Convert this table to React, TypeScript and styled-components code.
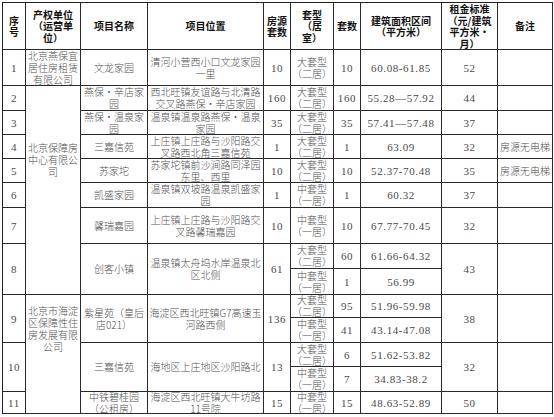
import React from 'react';
import styled, { createGlobalStyle } from 'styled-components';

const Global = createGlobalStyle`
  html, body { margin: 0; padding: 0; background: #fff; }
  body { font-family: "Noto Sans CJK SC", "Noto Sans", sans-serif; }
`;

const Page = styled.div`
  width: 554px;
  height: 417px;
  box-sizing: border-box;
  padding: 2px 0 0 2px;
  overflow: hidden;
`;

const Grid = styled.div`
  display: grid;
  width: max-content;
  grid-template-columns: 23px 55px 67px 116px 27px 43px 27px 81px 56px 55px;
  grid-template-rows: 47px 36px 25px 24px 24px 24px 25px 36px 25px 26px 23px 25px 24px 25px 22px;
  border-top: 1px solid #222;
  border-left: 1px solid #222;
`;

const Cell = styled.div<{ $rs?: number; $pt?: number }>`
  grid-row: span ${p => p.$rs ?? 1};
  box-sizing: border-box;
  min-width: 0;
  border-right: 1px solid #2a2a2a;
  border-bottom: 1px solid #2a2a2a;
  display: flex;
  justify-content: center;
  align-items: ${p => (p.$pt != null ? 'flex-start' : 'center')};
  padding-top: ${p => p.$pt ?? 0}px;
  text-align: center;
  font-size: 10px;
  font-weight: 300;
  line-height: 12px;
  color: #505050;
  white-space: nowrap;
`;

const Head = styled(Cell)`
  font-weight: 700;
  color: #111;
  line-height: 11.5px;
`;

const Num = styled.span`
  font-family: "Liberation Serif", serif;
  font-size: 11px;
  font-weight: 400;
  line-height: 12px;
  letter-spacing: 0.6px;
  color: #4a4a4a;
`;

const L: React.FC<{ t: string[] }> = ({ t }) => (
  <span>
    {t.map((s, i) => (
      <React.Fragment key={i}>
        {i > 0 && <br />}
        {s}
      </React.Fragment>
    ))}
  </span>
);

const BIG = ['大套型', '（二居）'];
const MID = ['中套型', '（一居）'];

export default function App() {
  return (
    <Page>
      <Global />
      <Grid>
        <Head><L t={['序', '号']} /></Head>
        <Head><L t={['产权单位', '（运营单', '位）']} /></Head>
        <Head>项目名称</Head>
        <Head>项目位置</Head>
        <Head><L t={['房源', '套数']} /></Head>
        <Head><L t={['套型', '（居', '室）']} /></Head>
        <Head>套数</Head>
        <Head><L t={['建筑面积区间', '（平方米）']} /></Head>
        <Head><L t={['租金标准', '（元/建筑', '平方米·', '月）']} /></Head>
        <Head>备注</Head>

        <Cell><Num>1</Num></Cell>
        <Cell><L t={['北京燕保宜', '居住房租赁', '有限公司']} /></Cell>
        <Cell>文龙家园</Cell>
        <Cell><L t={['清河小营西小口文龙家园', '一里']} /></Cell>
        <Cell><Num>10</Num></Cell>
        <Cell><L t={BIG} /></Cell>
        <Cell><Num>10</Num></Cell>
        <Cell><Num>60.08-61.85</Num></Cell>
        <Cell><Num>52</Num></Cell>
        <Cell />

        <Cell><Num>2</Num></Cell>
        <Cell $rs={8} $pt={56}><L t={['北京保障房', '中心有限公', '司']} /></Cell>
        <Cell><L t={['燕保・辛店家', '园']} /></Cell>
        <Cell><L t={['西北旺镇友谊路与北清路', '交叉路燕保・辛店家园']} /></Cell>
        <Cell><Num>160</Num></Cell>
        <Cell><L t={BIG} /></Cell>
        <Cell><Num>160</Num></Cell>
        <Cell><Num>55.28—57.92</Num></Cell>
        <Cell><Num>44</Num></Cell>
        <Cell />

        <Cell><Num>3</Num></Cell>
        <Cell><L t={['燕保・温泉家', '园']} /></Cell>
        <Cell><L t={['温泉镇温泉路燕保・温泉', '家园']} /></Cell>
        <Cell><Num>35</Num></Cell>
        <Cell><L t={BIG} /></Cell>
        <Cell><Num>35</Num></Cell>
        <Cell><Num>57.41—57.48</Num></Cell>
        <Cell><Num>37</Num></Cell>
        <Cell />

        <Cell><Num>4</Num></Cell>
        <Cell>三嘉信苑</Cell>
        <Cell><L t={['上庄镇上庄路与沙阳路交', '叉路西北角三嘉信苑']} /></Cell>
        <Cell><Num>1</Num></Cell>
        <Cell><L t={BIG} /></Cell>
        <Cell><Num>1</Num></Cell>
        <Cell><Num>63.09</Num></Cell>
        <Cell><Num>32</Num></Cell>
        <Cell>房源无电梯</Cell>

        <Cell><Num>5</Num></Cell>
        <Cell>苏家坨</Cell>
        <Cell><L t={['苏家坨镇前沙涧路同泽园', '东里、西里']} /></Cell>
        <Cell><Num>10</Num></Cell>
        <Cell><L t={BIG} /></Cell>
        <Cell><Num>10</Num></Cell>
        <Cell><Num>52.37-70.48</Num></Cell>
        <Cell><Num>35</Num></Cell>
        <Cell>房源无电梯</Cell>

        <Cell><Num>6</Num></Cell>
        <Cell>凯盛家园</Cell>
        <Cell><L t={['温泉镇双坡路温泉凯盛家', '园']} /></Cell>
        <Cell><Num>1</Num></Cell>
        <Cell><L t={MID} /></Cell>
        <Cell><Num>1</Num></Cell>
        <Cell><Num>60.32</Num></Cell>
        <Cell><Num>37</Num></Cell>
        <Cell />

        <Cell><Num>7</Num></Cell>
        <Cell>馨瑞嘉园</Cell>
        <Cell><L t={['上庄镇上庄路与沙阳路交', '叉路馨瑞嘉园']} /></Cell>
        <Cell><Num>10</Num></Cell>
        <Cell><L t={MID} /></Cell>
        <Cell><Num>10</Num></Cell>
        <Cell><Num>67.77-70.45</Num></Cell>
        <Cell><Num>32</Num></Cell>
        <Cell />

        <Cell $rs={2}><Num>8</Num></Cell>
        <Cell $rs={2}>创客小镇</Cell>
        <Cell $rs={2}><L t={['温泉镇太舟坞水岸温泉北', '区北侧']} /></Cell>
        <Cell $rs={2}><Num>61</Num></Cell>
        <Cell><L t={BIG} /></Cell>
        <Cell><Num>60</Num></Cell>
        <Cell><Num>61.66-64.32</Num></Cell>
        <Cell $rs={2}><Num>43</Num></Cell>
        <Cell $rs={2} />
        <Cell><L t={MID} /></Cell>
        <Cell><Num>1</Num></Cell>
        <Cell><Num>56.99</Num></Cell>

        <Cell $rs={2}><Num>9</Num></Cell>
        <Cell $rs={5} $pt={10}><L t={['北京市海淀', '区保障性住', '房发展有限', '公司']} /></Cell>
        <Cell $rs={2}><L t={['紫星苑（皇后', '店021）']} /></Cell>
        <Cell $rs={2}><L t={['海淀区西北旺镇G7高速玉', '河路西侧']} /></Cell>
        <Cell $rs={2}><Num>136</Num></Cell>
        <Cell><L t={BIG} /></Cell>
        <Cell><Num>95</Num></Cell>
        <Cell><Num>51.96-59.98</Num></Cell>
        <Cell $rs={2}><Num>38</Num></Cell>
        <Cell $rs={2} />
        <Cell><L t={MID} /></Cell>
        <Cell><Num>41</Num></Cell>
        <Cell><Num>43.14-47.08</Num></Cell>

        <Cell $rs={2}><Num>10</Num></Cell>
        <Cell $rs={2}>三嘉信苑</Cell>
        <Cell $rs={2}>海地区上庄地区沙阳路北</Cell>
        <Cell $rs={2}><Num>13</Num></Cell>
        <Cell><L t={BIG} /></Cell>
        <Cell><Num>6</Num></Cell>
        <Cell><Num>51.62-53.82</Num></Cell>
        <Cell $rs={2}><Num>32</Num></Cell>
        <Cell $rs={2} />
        <Cell><L t={MID} /></Cell>
        <Cell><Num>7</Num></Cell>
        <Cell><Num>34.83-38.2</Num></Cell>

        <Cell><Num>11</Num></Cell>
        <Cell><L t={['中铁碧桂园', '（公租房）']} /></Cell>
        <Cell><L t={['海淀区西北旺镇大牛坊路', '11号院']} /></Cell>
        <Cell><Num>15</Num></Cell>
        <Cell><L t={MID} /></Cell>
        <Cell><Num>15</Num></Cell>
        <Cell><Num>48.63-52.89</Num></Cell>
        <Cell><Num>50</Num></Cell>
        <Cell />
      </Grid>
    </Page>
  );
}
